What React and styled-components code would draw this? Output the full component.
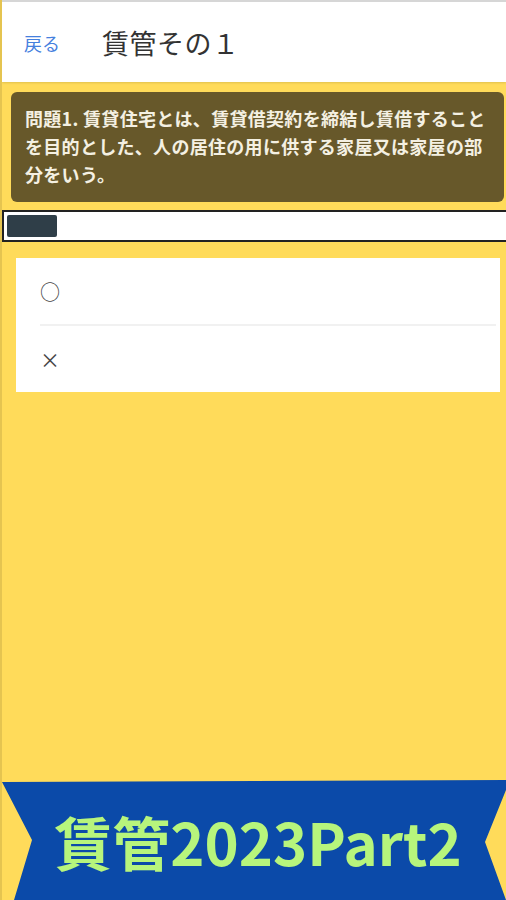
import React from "react";
import styled, { createGlobalStyle } from "styled-components";

const GlobalStyle = createGlobalStyle`
  html, body {
    margin: 0;
    padding: 0;
    background: #ffdb5a;
  }
  body {
    font-family: "Noto Sans CJK JP", "Noto Sans", sans-serif;
  }
`;

const choices = ["○", "×"];

export default function App() {
  return (
    <Page>
      <GlobalStyle />
      <Header>
        <BackLink>戻る</BackLink>
        <Title>賃管その１</Title>
      </Header>
      <Main>
        <Question>
          問題1. 賃貸住宅とは、賃貸借契約を締結し賃借することを目的とした、人の居住の用に供する家屋又は家屋の部分をいう。
        </Question>
        <Progress>
          <ProgressFill style={{ width: 50 }} />
        </Progress>
        <ChoiceCard>
          {choices.map((c, i) => (
            <Choice key={c} divider={i > 0}>
              <ChoiceLabel>{c}</ChoiceLabel>
            </Choice>
          ))}
        </ChoiceCard>
      </Main>
      <Banner>
        <BannerText>賃管2023Part2</BannerText>
      </Banner>
    </Page>
  );
}

const Page = styled.div`
  display: flex;
  flex-direction: column;
  min-height: 100vh;
  overflow: hidden;
  border-left: 2px solid rgba(0, 0, 0, 0.1);
  box-sizing: border-box;
`;

const Header = styled.div`
  display: flex;
  align-items: center;
  height: 80px;
  background: #fff;
  border-top: 2px solid #d6d6d6;
  box-shadow: 0 1px 2px rgba(0, 0, 0, 0.12);
  padding-left: 22px;
  gap: 42px;
`;

const BackLink = styled.span`
  font-size: 18px;
  color: #4580de;
  margin-top: 2px;
`;

const Title = styled.h1`
  margin: 0;
  font-size: 27px;
  font-weight: 400;
  color: #333;
  letter-spacing: 0.5px;
`;

const Main = styled.div`
  flex: 1;
  display: flex;
  flex-direction: column;
  padding-top: 10px;
`;

const Question = styled.div`
  margin: 0 2px 0 9px;
  padding: 12px 14px 14px 14px;
  background: #67582a;
  border-radius: 6px;
  color: #f4f0e2;
  font-size: 18px;
  font-weight: 700;
  line-height: 28px;
  letter-spacing: 0.3px;
`;

const Progress = styled.div`
  margin: 8px -10px 0 0;
  height: 22px;
  padding: 3px;
  background: #fff;
  border: 2px solid #222;
  box-sizing: content-box;
`;

const ProgressFill = styled.div`
  height: 100%;
  background: #2f3e48;
  border-radius: 2px;
`;

const ChoiceCard = styled.div`
  margin: 16px 6px 0 14px;
  background: #fff;
`;

const Choice = styled.div`
  height: 66px;
  display: flex;
  align-items: center;
  border-top: ${(p) => (p.divider ? "2px solid #f1f1f1" : "none")};
  margin: ${(p) => (p.divider ? "0 4px 0 24px" : "0")};
  padding-left: ${(p) => (p.divider ? "0" : "24px")};
`;

const ChoiceLabel = styled.span`
  font-family: "Noto Sans CJK JP", sans-serif;
  font-size: 20px;
  color: #444;
`;

const Banner = styled.div`
  height: 120px;
  background: #0b4aa9;
  display: flex;
  align-items: center;
  justify-content: center;
  clip-path: polygon(
    0 2px,
    100% 0,
    100% 10px,
    483px 62px,
    100% 120px,
    12px 120px,
    30px 60px
  );
`;

const BannerText = styled.div`
  font-family: "Noto Sans CJK JP", sans-serif;
  font-weight: 700;
  font-size: 58px;
  color: #b7f57c;
  margin-left: 8px;
  margin-top: 2px;
`;
